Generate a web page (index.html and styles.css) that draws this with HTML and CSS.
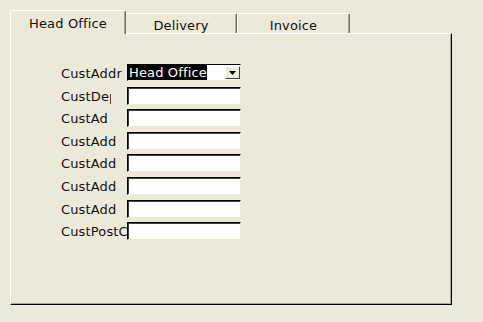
FILE: index.html
```
<!DOCTYPE html>
<html>
<head>
  <link rel="stylesheet" href="styles.css">
</head>
<body>
  <div class="window">
    <div class="tabs">
      <div class="tab tab-active">Head Office</div>
      <div class="tab tab-delivery">Delivery</div>
      <div class="tab tab-invoice">Invoice</div>
    </div>

    <div class="panel">
      <div class="form">
        <span class="label w-addr">CustAddr</span>
        <div class="combo">
          <span class="combo-value">Head Office</span>
          <span class="combo-button">
            <svg width="7" height="4" viewBox="0 0 7 4">
              <path d="M0 0h7L3.5 4z" fill="#000"/>
            </svg>
          </span>
        </div>

        <span class="label w-dept">CustDept</span>
        <div class="field"></div>

        <span class="label w-ad">CustAddress1</span>
        <div class="field"></div>

        <span class="label w-add">CustAddress2</span>
        <div class="field"></div>

        <span class="label w-add">CustAddress3</span>
        <div class="field"></div>

        <span class="label w-add">CustAddress4</span>
        <div class="field"></div>

        <span class="label w-add">CustAddress5</span>
        <div class="field"></div>

        <span class="label w-post">CustPostCode</span>
        <div class="field"></div>
      </div>
    </div>
  </div>
</body>
</html>
```

FILE: styles.css
```
:root {
  --xp-bg: #ECE9D8;
  --xp-light: #FFFFFF;
  --xp-shadow: #ACA899;
  --xp-dark: #716F64;
  --xp-black: #000000;
}

body {
  margin: 0;
  background-color: var(--xp-bg);
  font-family: "DejaVu Sans", Verdana, sans-serif;
  font-size: 13px;
  letter-spacing: 0.15px;
  color: #111;
}

.window {
  padding: 10px 0 0 10px;
}

.tabs {
  display: flex;
  align-items: flex-end;
  height: 23px;
}

.tab {
  box-sizing: border-box;
  height: 20px;
  padding-top: 3px;
  line-height: 17px;
  text-align: center;
  border-top: 1px solid var(--xp-light);
  border-left: 1px solid var(--xp-light);
  border-right: 1px solid var(--xp-dark);
  box-shadow: inset -1px 0 var(--xp-shadow);
  border-radius: 2px 2px 0 0;
  background-color: var(--xp-bg);
}

.tab-active {
  position: relative;
  z-index: 1;
  width: 116px;
  height: 24px;
  margin-bottom: -1px;
  line-height: 19px;
}

.tab-delivery {
  width: 111px;
  border-left: none;
}

.tab-invoice {
  width: 113px;
}

.panel {
  box-sizing: border-box;
  width: 442px;
  height: 272px;
  border-top: 1px solid var(--xp-light);
  border-left: 1px solid var(--xp-light);
  border-right: 1px solid var(--xp-black);
  border-bottom: 1px solid var(--xp-black);
  box-shadow: inset -1px -1px var(--xp-shadow);
  padding: 30px 0 0 50px;
}

.form {
  display: grid;
  grid-template-columns: 66px 114px;
  grid-auto-rows: 18px;
  row-gap: 4.6px;
}

.label {
  line-height: 20px;
  white-space: nowrap;
  overflow: hidden;
}

.w-addr { width: 61px; }
.w-dept { width: 50px; }
.w-ad { width: 47px; }
.w-add { width: 56px; }
.w-post { width: 66px; }

.field {
  box-sizing: border-box;
  background-color: #fff;
  border-top: 1px solid var(--xp-black);
  border-left: 1px solid var(--xp-black);
  border-right: 1px solid var(--xp-bg);
  border-bottom: 1px solid var(--xp-bg);
  box-shadow: inset 1px 1px #404040;
}

.combo {
  box-sizing: border-box;
  height: 17px;
  display: flex;
  align-items: stretch;
  background-color: #fff;
  border-top: 1px solid var(--xp-black);
  border-left: 1px solid var(--xp-black);
  border-right: 1px solid var(--xp-bg);
  border-bottom: 1px solid var(--xp-bg);
}

.combo-value {
  background-color: #000;
  color: #fff;
  line-height: 15px;
  padding-left: 1px;
  white-space: nowrap;
}

.combo-button {
  box-sizing: border-box;
  margin-left: auto;
  margin-top: 1px;
  margin-bottom: 1px;
  width: 15px;
  display: flex;
  align-items: center;
  justify-content: center;
  background-color: var(--xp-bg);
  border-top: 1px solid var(--xp-light);
  border-left: 1px solid var(--xp-light);
  border-right: 1px solid #404040;
  border-bottom: 1px solid #404040;
}
```
